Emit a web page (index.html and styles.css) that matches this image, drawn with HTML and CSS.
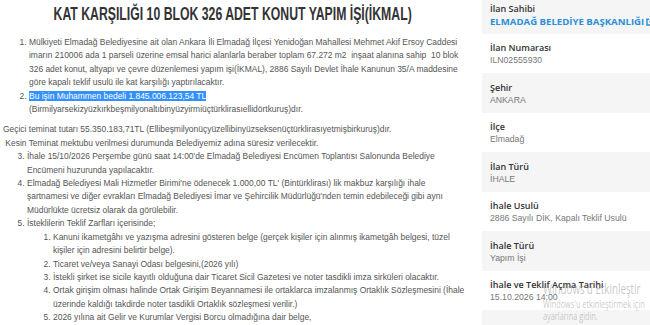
FILE: index.html
```html
<!DOCTYPE html>
<html lang="tr">
<head>
    <meta charset="UTF-8">
    <meta name="viewport" content="width=device-width, initial-scale=1.0">
    <title>İhale İlanı</title>
    <link rel="stylesheet" href="styles.css">
</head>
<body>
    <div class="page">
        <div class="content">
            <h1 class="title"><span>KAT KARŞILIĞI 10 BLOK 326 ADET KONUT YAPIM İŞİ(İKMAL)</span></h1>
            <ol class="terms terms-first">
                <li>Mülkiyeti Elmadağ Belediyesine ait olan Ankara İli Elmadağ İlçesi Yenidoğan Mahallesi Mehmet Akif Ersoy Caddesi imarın 210006 ada 1 parseli üzerine emsal harici alanlarla beraber toplam 67.272 m2&nbsp; inşaat alanına sahip&nbsp; 10 blok 326 adet konut, altyapı ve çevre düzenlemesi yapım işi(İKMAL), 2886 Sayılı Devlet İhale Kanunun 35/A maddesine göre kapalı teklif usulü ile kat karşılığı yaptırılacaktır.</li>
                <li><span class="sel">Bu işin Muhammen bedeli 1.845.006.123,54 TL </span><br>(Birmilyarsekizyüzkırkbeşmilyonaltıbinyüzyirmiüçtürklirasıellidörtkuruş)dır.</li>
            </ol>
            <p class="note">Geçici teminat tutarı 55.350.183,71TL (Ellibeşmilyonüçyüzellibinyüzseksenüçtürklirasıyetmişbirkuruş)dır.<br>&nbsp;Kesin Teminat mektubu verilmesi durumunda Belediyemiz adına süresiz verilecektir.</p>
            <ol class="terms terms-rest" start="3">
                <li>İhale 15/10/2026 Perşembe günü saat 14:00'de Elmadağ Belediyesi Encümen Toplantısı Salonunda Belediye Encümeni huzurunda yapılacaktır.</li>
                <li>Elmadağ Belediyesi Mali Hizmetler Birimi'ne ödenecek 1.000,00 TL' (Bintürklirası) lik makbuz karşılığı ihale şartnamesi ve diğer evrakları Elmadağ Belediyesi İmar ve Şehircilik Müdürlüğü'nden temin edebileceği gibi aynı Müdürlükte ücretsiz olarak da görülebilir.</li>
                <li>İsteklilerin Teklif Zarfları içerisinde;
                    <ol class="docs">
                        <li>Kanuni ikametgâhı ve yazışma adresini gösteren belge (gerçek kişiler için alınmış ikametgâh belgesi, tüzel kişiler için adresini belirtir belge).</li>
                        <li>Ticaret ve/veya Sanayi Odası belgesini,(2026 yılı)</li>
                        <li>İstekli şirket ise sicile kayıtlı olduğuna dair Ticaret Sicil Gazetesi ve noter tasdikli imza sirküleri olacaktır.</li>
                        <li>Ortak girişim olması halinde Ortak Girişim Beyannamesi ile ortaklarca imzalanmış Ortaklık Sözleşmesini (İhale üzerinde kaldığı takdirde noter tasdikli Ortaklık sözleşmesi verilir.)</li>
                        <li>2026 yılına ait Gelir ve Kurumlar Vergisi Borcu olmadığına dair belge,</li>
                    </ol>
                </li>
            </ol>
        </div>

        <div class="info">
            <div class="info-row">
                <div class="label">İlan Sahibi</div>
                <a class="owner" href="#">ELMADAĞ BELEDİYE BAŞKANLIĞI<svg class="ext" width="8" height="8" viewBox="0 0 10 10">
                        <path d="M4 1.5H1.2v7.3h7.3V6" fill="none" stroke="currentColor" stroke-width="1.8"/>
                        <path d="M5.5 0.9h3.6v3.6" fill="none" stroke="currentColor" stroke-width="1.8"/>
                        <path d="M9 1L4.5 5.5" fill="none" stroke="currentColor" stroke-width="1.8"/>
                    </svg></a>
            </div>
            <div class="info-row">
                <div class="label">İlan Numarası</div>
                <div class="value">ILN02555930</div>
            </div>
            <div class="info-row">
                <div class="label">Şehir</div>
                <div class="value">ANKARA</div>
            </div>
            <div class="info-row">
                <div class="label">İlçe</div>
                <div class="value">Elmadağ</div>
            </div>
            <div class="info-row">
                <div class="label">İlan Türü</div>
                <div class="value">İHALE</div>
            </div>
            <div class="info-row">
                <div class="label">İhale Usulü</div>
                <div class="value">2886 Sayılı DİK, Kapalı Teklif Usulü</div>
            </div>
            <div class="info-row">
                <div class="label">İhale Türü</div>
                <div class="value">Yapım İşi</div>
            </div>
            <div class="info-row">
                <div class="label">İhale ve Teklif Açma Tarihi</div>
                <div class="value">15.10.2026 14:00</div>
            </div>
            <div class="info-row"></div>
        </div>
    </div>

    <!-- etkinleştirme filigranı -->
    <div class="watermark">
        <div class="wm-title">Windows'u Etkinleştir</div>
        <div class="wm-text">Windows'u etkinleştirmek için<br>ayarlarına gidin.</div>
    </div>
</body>
</html>
```

FILE: styles.css
```css
body {
    margin: 0;
    font-family: "Liberation Sans", Arial, sans-serif;
    color: #555;
    background: #fff;
    overflow: hidden;
}
.page {
    display: flex;
    align-items: flex-start;
    height: 325px;
    overflow: hidden;
}
.content {
    flex: none;
    width: 466px;
    font-size: 8.45px;
    line-height: 13.4px;
}
.title {
    display: flex;
    justify-content: center;
    margin: 0;
    font-size: 19px;
    line-height: 28px;
    font-weight: bold;
    color: #333;
}
.title span {
    white-space: nowrap;
    transform: scaleX(0.645);
}
.terms {
    margin: 0;
}
.terms-first {
    margin-top: 8px;
    padding-left: 29px;
}
.terms-rest {
    padding-left: 27px;
}
.docs {
    margin: 0;
    padding-left: 26px;
}
.note {
    margin: 7px 0 0 3px;
}
.sel {
    background: #3390ff;
    color: #fff;
}
.info {
    flex: 1;
    margin-left: 16px;
    margin-top: -6px;
}
.info-row {
    box-sizing: border-box;
    height: 39.5px;
    padding: 7.5px 8px 0;
}
.info-row:nth-child(odd) {
    background: #f5f5f5;
}
.label {
    font-family: "Open Sans", sans-serif;
    font-weight: 600;
    font-size: 9px;
    line-height: 13px;
    color: #333;
}
.value {
    font-size: 8.7px;
    line-height: 13px;
    color: #777;
}
.owner {
    display: block;
    font-family: "Open Sans", sans-serif;
    font-weight: 700;
    font-size: 9.6px;
    line-height: 13px;
    color: #2a8fd6;
    text-decoration: none;
    white-space: nowrap;
}
.ext {
    margin-left: 2px;
    vertical-align: -1px;
}
.watermark {
    position: absolute;
    left: 543px;
    top: 279px;
    color: rgba(130, 130, 130, 0.45);
    font-family: "Open Sans", sans-serif;
    white-space: nowrap;
    transform: scaleX(0.7);
    transform-origin: 0 0;
    pointer-events: none;
}
.wm-title {
    font-size: 14px;
    line-height: 19px;
}
.wm-text {
    font-size: 10.5px;
    line-height: 12px;
}
```
